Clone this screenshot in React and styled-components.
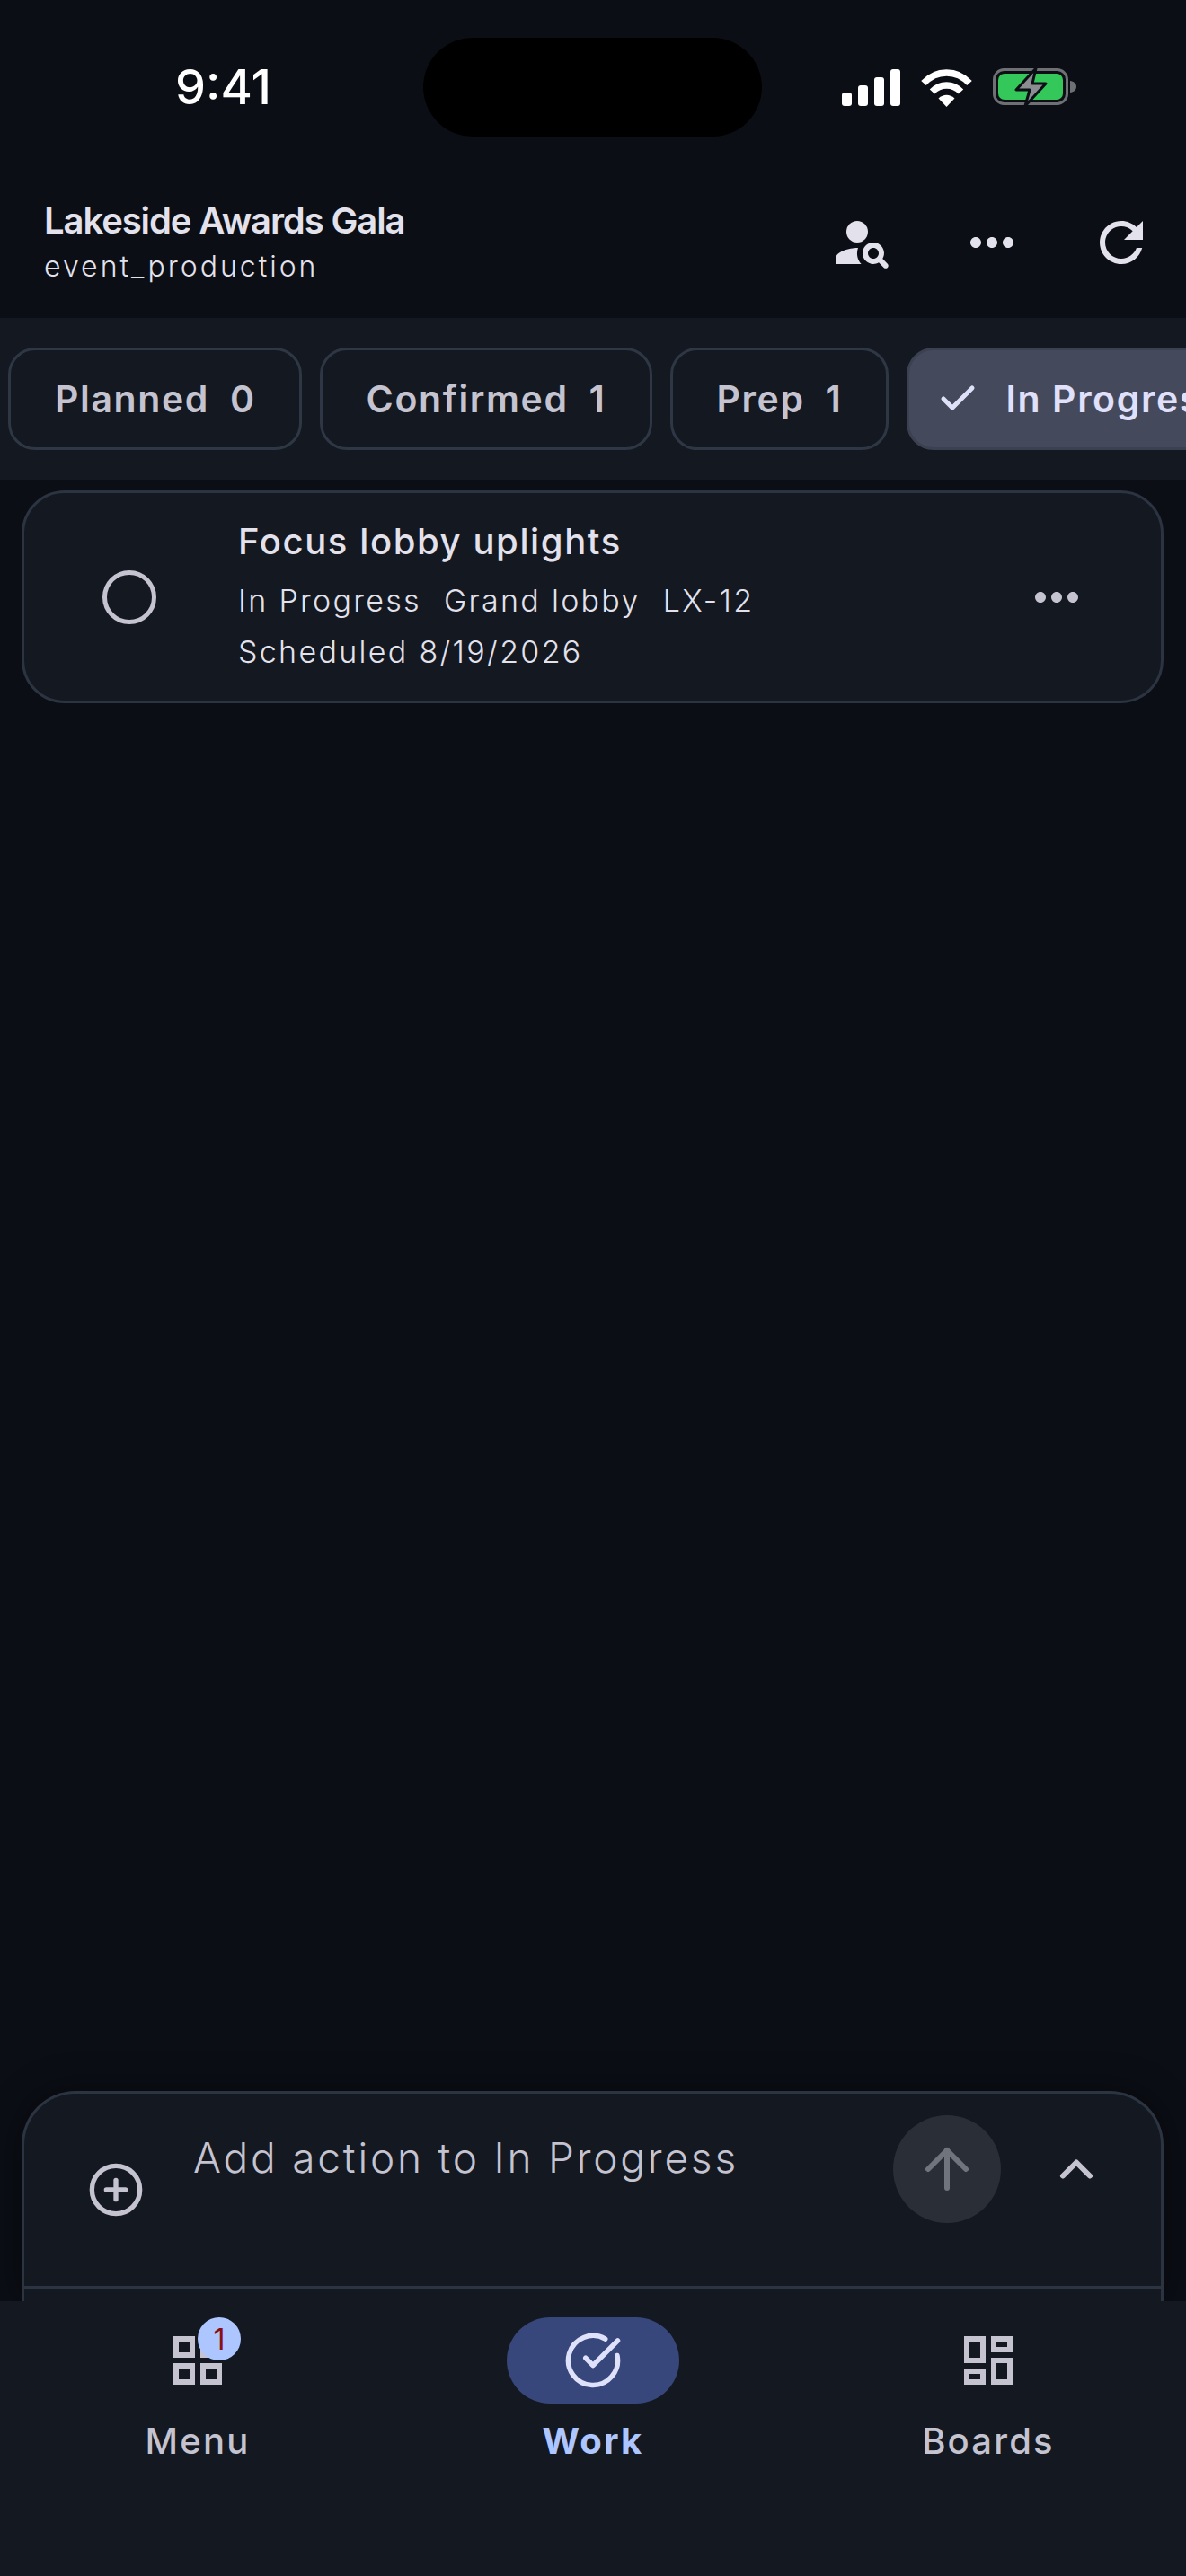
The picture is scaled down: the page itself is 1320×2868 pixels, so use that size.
import React from "react";
import styled, { createGlobalStyle } from "styled-components";
import { ArrowUp, Check, ChevronUp, CircleCheckBig, CirclePlus } from "lucide-react";

const GlobalStyle = createGlobalStyle`
  html, body {
    margin: 0;
    padding: 0;
    background: #0b0e15;
  }
  * {
    box-sizing: border-box;
  }
`;

const chips = [
  { label: "Planned", count: 0 },
  { label: "Confirmed", count: 1 },
  { label: "Prep", count: 1 },
  { label: "In Progress", count: 1, active: true },
];

function MoreIcon() {
  return (
    <svg width="72" height="72" viewBox="0 0 24 24" fill="currentColor">
      <path d="M6 10c-1.1 0-2 .9-2 2s.9 2 2 2 2-.9 2-2-.9-2-2-2zm12 0c-1.1 0-2 .9-2 2s.9 2 2 2 2-.9 2-2-.9-2-2-2zm-6 0c-1.1 0-2 .9-2 2s.9 2 2 2 2-.9 2-2-.9-2-2-2z" />
    </svg>
  );
}

function StatusIcons() {
  return (
    <StatusRight>
      <svg width="65" height="41" viewBox="0 0 65 41" fill="#fff">
        <rect x="0" y="26" width="11" height="15" rx="3" />
        <rect x="18" y="18" width="11" height="23" rx="3" />
        <rect x="36" y="9" width="11" height="32" rx="3" />
        <rect x="54" y="0" width="11" height="41" rx="3" />
      </svg>
      <svg width="57" height="43" viewBox="0 0 57 43" fill="none" stroke="#fff" strokeWidth="7.5">
        <path d="M3 16.5C17 1 40 1 54 16.5" />
        <path d="M12.5 26c9-9.5 23-9.5 32 0" />
        <path d="M19.5 33.5c5.5-5 12.5-5 18 0L28.5 43z" fill="#fff" stroke="none" />
      </svg>
      <svg width="94" height="44" viewBox="0 0 94 44">
        <rect x="1.5" y="2.5" width="81" height="38" rx="11" fill="none" stroke="#6e7074" strokeWidth="3" />
        <rect x="6" y="7" width="72" height="29" rx="7" fill="#34c759" />
        <path d="M86 15c4 .5 7 3 7 6.500s-3 6-7 6.500z" fill="#6e7074" />
        <path d="M48 1 26 25h15l-5 18 23-25H44z" fill="#8b8d91" stroke="#0b0e15" strokeWidth="3" strokeLinejoin="round" />
      </svg>
    </StatusRight>
  );
}

export default function App() {
  return (
    <Page>
      <GlobalStyle />
      <StatusBar>
        <Time>9:41</Time>
        <Island />
        <StatusIcons />
      </StatusBar>

      <Header>
        <TitleBlock>
          <Title>Lakeside Awards Gala</Title>
          <Subtitle>event_production</Subtitle>
        </TitleBlock>
        <HeaderActions>
          <svg width="72" height="72" viewBox="0 0 24 24" fill="currentColor">
            <circle cx="10" cy="8" r="4" />
            <path d="M10.350 14.010C7.620 13.910 2 15.270 2 18v2h9.540c-2.470-2.760-1.230-5.890-1.190-5.990z" />
            <path d="M19.430 18.020c.47-.8.7-1.770.48-2.820-.34-1.640-1.720-2.950-3.380-3.160-2.630-.34-4.850 1.870-4.500 4.500.22 1.660 1.520 3.040 3.160 3.380 1.050.22 2.020-.01 2.820-.48l1.860 1.860c.39.39 1.020.39 1.410 0 .39-.39.39-1.020 0-1.410l-1.850-1.870zM16 18c-1.100 0-2-.9-2-2s.9-2 2-2 2 .9 2 2-.9 2-2 2z" />
          </svg>
          <MoreIcon />
          <svg width="72" height="72" viewBox="0 0 24 24" fill="currentColor">
            <path d="M17.650 6.350C16.200 4.900 14.210 4 12 4c-4.420 0-7.990 3.580-7.990 8s3.570 8 7.990 8c3.730 0 6.840-2.550 7.730-6h-2.080c-.82 2.330-3.040 4-5.650 4-3.310 0-6-2.690-6-6s2.690-6 6-6c1.660 0 3.140.69 4.220 1.780L13 11h7V4l-2.350 2.350z" />
          </svg>
        </HeaderActions>
      </Header>

      <ChipStrip>
        {chips.map((chip) => (
          <Chip key={chip.label} $active={chip.active}>
            {chip.active && <Check size={48} strokeWidth={2.5} />}
            <span>{chip.label}</span>
            <span>{chip.count}</span>
          </Chip>
        ))}
      </ChipStrip>

      <Main>
        <TaskCard>
          <TaskCircle />
          <TaskBody>
            <TaskTitle>Focus lobby uplights</TaskTitle>
            <TaskMeta>
              <span>In Progress</span>
              <span>Grand lobby</span>
              <span>LX-12</span>
            </TaskMeta>
            <TaskMeta>
              <span>Scheduled 8/19/2026</span>
            </TaskMeta>
          </TaskBody>
          <TaskMore>
            <MoreIcon />
          </TaskMore>
        </TaskCard>
      </Main>

      <Composer>
        <ComposerRow>
          <AddButton>
            <CirclePlus size={64} strokeWidth={2} />
          </AddButton>
          <Placeholder>Add action to In Progress</Placeholder>
          <SendButton>
            <ArrowUp size={72} strokeWidth={2} />
          </SendButton>
          <ExpandButton>
            <ChevronUp size={60} strokeWidth={2.4} />
          </ExpandButton>
        </ComposerRow>
        <ComposerRule />
      </Composer>

      <BottomNav>
        <NavItem>
          <NavIcon>
            <svg width="72" height="72" viewBox="0 0 24 24" fill="currentColor">
              <path d="M3 3v8h8V3H3zm6 6H5V5h4v4zm-6 4v8h8v-8H3zm6 6H5v-4h4v4zm4-16v8h8V3h-8zm6 6h-4V5h4v4zm-6 4v8h8v-8h-8zm6 6h-4v-4h4v4z" />
            </svg>
            <Badge>1</Badge>
          </NavIcon>
          <NavLabel>Menu</NavLabel>
        </NavItem>
        <NavItem>
          <NavIcon $active>
            <CircleCheckBig size={66} strokeWidth={2} />
          </NavIcon>
          <NavLabel $active>Work</NavLabel>
        </NavItem>
        <NavItem>
          <NavIcon>
            <svg width="72" height="72" viewBox="0 0 24 24" fill="currentColor">
              <path d="M19 5v2h-4V5h4M9 5v6H5V5h4m10 8v6h-4v-6h4M9 17v2H5v-2h4M21 3h-8v6h8V3zM11 3H3v10h8V3zm10 8h-8v10h8V11zm-10 4H3v6h8v-6z" />
            </svg>
          </NavIcon>
          <NavLabel>Boards</NavLabel>
        </NavItem>
      </BottomNav>
    </Page>
  );
}

const Page = styled.div`
  display: flex;
  flex-direction: column;
  width: 1320px;
  height: 2868px;
  overflow: hidden;
  background: #0b0e15;
  font-family: Inter, "Liberation Sans", sans-serif;
`;

const StatusBar = styled.div`
  display: flex;
  align-items: center;
  height: 110px;
  margin-top: 42px;
`;

const Time = styled.div`
  width: 471px;
  padding-left: 195px;
  font-size: 54px;
  font-weight: 500;
  line-height: 110px;
  color: #fff;
`;

const Island = styled.div`
  width: 377px;
  height: 110px;
  border-radius: 55px;
  background: #000;
`;

const StatusRight = styled.div`
  display: flex;
  align-items: center;
  gap: 23px;
  margin-left: 89px;
`;

const Header = styled.header`
  display: flex;
  align-items: flex-start;
  justify-content: space-between;
  height: 202px;
  padding: 70px 36px 0 49px;
`;

const TitleBlock = styled.div`
  display: flex;
  flex-direction: column;
`;

const Title = styled.div`
  font-size: 40px;
  font-weight: 600;
  line-height: 48px;
  letter-spacing: -1.1px;
  color: #e3e2ec;
`;

const Subtitle = styled.div`
  margin-top: 5px;
  font-size: 32px;
  font-weight: 350;
  line-height: 44px;
  letter-spacing: 3px;
  color: #e3e2ec;
`;

const HeaderActions = styled.div`
  display: flex;
  align-items: center;
  gap: 72px;
  margin-top: 12px;
  color: #e3e2ec;
`;

const ChipStrip = styled.div`
  display: flex;
  align-items: center;
  gap: 20px;
  height: 180px;
  padding-left: 9px;
  overflow: hidden;
  background: #131821;
`;

const Chip = styled.div`
  display: flex;
  flex: none;
  align-items: center;
  gap: ${(p) => (p.$active ? "0" : "23px")};
  height: 114px;
  padding: 0 48px 0 ${(p) => (p.$active ? "30px" : "49px")};
  border: 3px solid ${(p) => (p.$active ? "#3b4150" : "#2f3744")};
  border-radius: 30px;
  background: ${(p) => (p.$active ? "#444a5c" : "transparent")};
  font-size: 41px;
  font-weight: 600;
  letter-spacing: 1.6px;
  color: ${(p) => (p.$active ? "#e0e0fb" : "#c4c3cf")};

  svg {
    margin-right: 30px;
  }
  span + span {
    margin-left: ${(p) => (p.$active ? "23px" : "0")};
  }
`;

const Main = styled.main`
  flex: 1;
  padding: 12px 25px 0 24px;
`;

const TaskCard = styled.div`
  display: flex;
  align-items: center;
  height: 237px;
  padding-left: 87px;
  border: 3px solid #2c3441;
  border-radius: 48px;
  background: #131821;
`;

const TaskCircle = styled.div`
  flex: none;
  width: 60px;
  height: 60px;
  border: 5px solid #c4c3cf;
  border-radius: 50%;
`;

const TaskBody = styled.div`
  display: flex;
  flex: 1;
  flex-direction: column;
  margin-left: 91px;
`;

const TaskTitle = styled.div`
  margin-bottom: 9px;
  font-size: 40px;
  font-weight: 500;
  line-height: 56px;
  letter-spacing: 1.6px;
  color: #e3e2ec;
`;

const TaskMeta = styled.div`
  display: flex;
  gap: 25px;
  font-size: 34px;
  font-weight: 350;
  line-height: 57px;
  letter-spacing: 2.3px;
  color: #e3e2ec;
`;

const TaskMore = styled.div`
  flex: none;
  display: flex;
  margin-right: 80px;
  color: #c4c3cf;
`;

const Composer = styled.section`
  position: relative;
  flex: none;
  display: flex;
  flex-direction: column;
  height: 234px;
  margin: 0 25px 0 24px;
  border: 3px solid #2c3441;
  border-bottom: none;
  border-radius: 60px 60px 0 0;
  background: #131821;
  box-shadow: 0 0 40px rgba(0, 0, 0, 0.45);
`;

const ComposerRow = styled.div`
  flex: 1;
  display: flex;
  align-items: flex-start;
`;

const AddButton = styled.div`
  flex: none;
  display: flex;
  margin: 75px 0 0 70px;
  color: #c4c3cf;
`;

const Placeholder = styled.div`
  flex: 1;
  margin: 41px 0 0 54px;
  font-size: 46px;
  font-weight: 350;
  line-height: 60px;
  letter-spacing: 2.8px;
  color: #c4c3cf;
`;

const SendButton = styled.div`
  flex: none;
  display: flex;
  align-items: center;
  justify-content: center;
  width: 120px;
  height: 120px;
  margin-top: 24px;
  border-radius: 50%;
  background: #2a2e37;
  color: #70747c;
`;

const ExpandButton = styled.div`
  flex: none;
  display: flex;
  margin: 54px 64px 0 54px;
  color: #c4c3cf;
`;

const ComposerRule = styled.div`
  flex: none;
  height: 3px;
  margin-bottom: 14px;
  background: #2c3441;
`;

const BottomNav = styled.nav`
  position: relative;
  flex: none;
  display: grid;
  grid-template-columns: repeat(3, 1fr);
  height: 306px;
  padding-top: 18px;
  background: #131821;
`;

const NavItem = styled.div`
  display: flex;
  flex-direction: column;
  align-items: center;
`;

const NavIcon = styled.div`
  position: relative;
  display: flex;
  align-items: center;
  justify-content: center;
  width: 192px;
  height: 96px;
  border-radius: 48px;
  background: ${(p) => (p.$active ? "#38477b" : "transparent")};
  color: ${(p) => (p.$active ? "#dfe1fb" : "#c4c3cf")};
`;

const Badge = styled.span`
  position: absolute;
  top: 0;
  left: 96px;
  display: flex;
  align-items: center;
  justify-content: center;
  width: 48px;
  height: 48px;
  border-radius: 50%;
  background: #aec6ff;
  font-size: 32px;
  font-weight: 400;
  color: #8a0f12;
`;

const NavLabel = styled.div`
  margin-top: 14px;
  font-size: 40px;
  font-weight: ${(p) => (p.$active ? 700 : 500)};
  line-height: 56px;
  letter-spacing: 2.2px;
  color: ${(p) => (p.$active ? "#aec6ff" : "#c4c3cf")};
`;
